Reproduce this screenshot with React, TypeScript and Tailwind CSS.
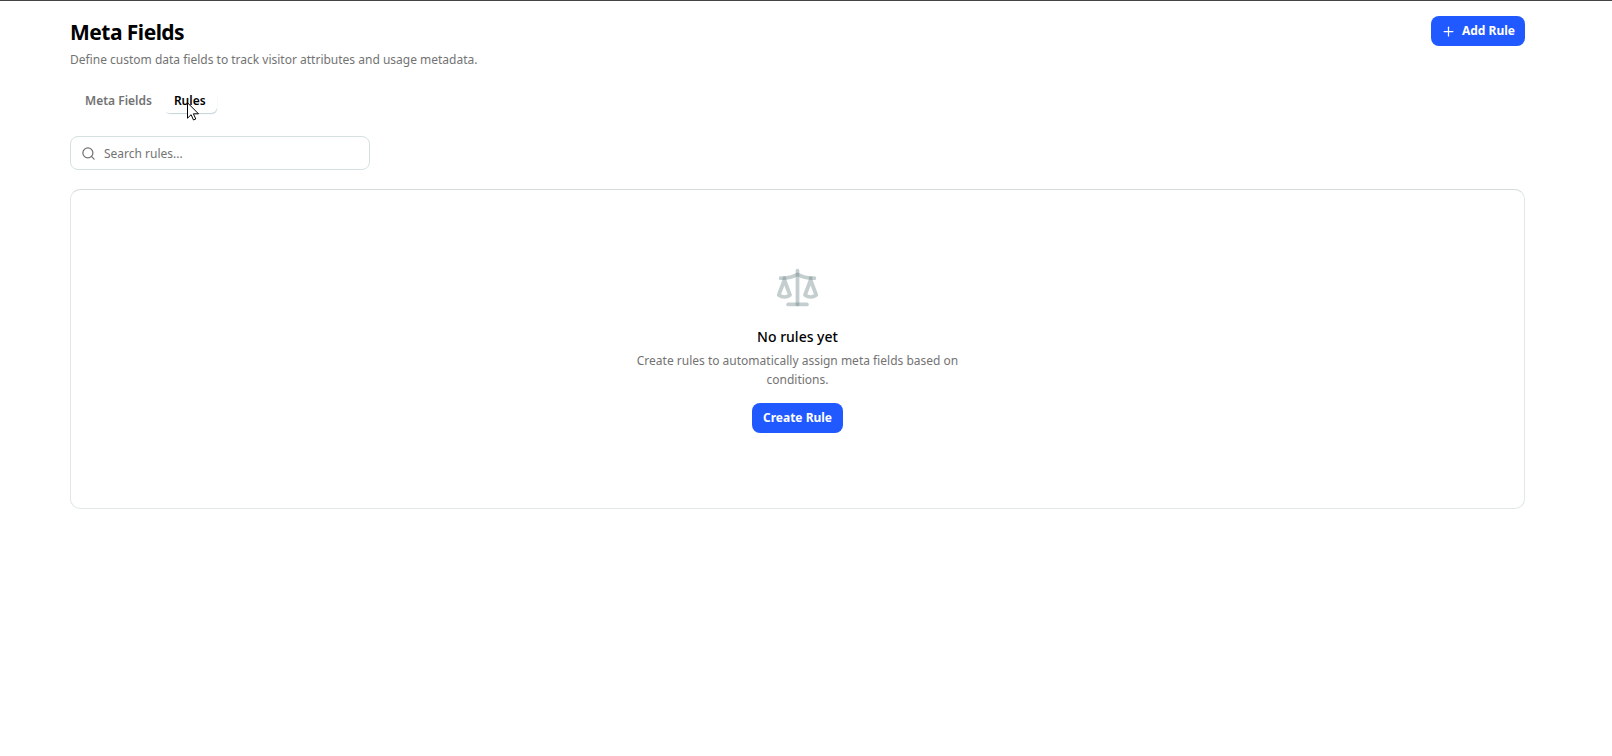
import * as React from "react";
import { Plus, Scale, Search } from "lucide-react";
import { clsx } from "clsx";

const tabs = [
  { id: "fields", title: "Meta Fields" },
  { id: "rules", title: "Rules" },
];

export default function App() {
  const [activeTab, setActiveTab] = React.useState("rules");
  const [query, setQuery] = React.useState("");

  return (
    <main className="min-h-screen border-t border-[#444444] bg-white pt-[15px] pr-[87px] pb-8 pl-[70px] font-['Noto_Sans','Open_Sans',sans-serif] text-xs text-[#737373]">
      <header className="flex items-start justify-between">
        <div>
          <h1 className="text-[21px] leading-8 font-bold tracking-tight text-black">
            Meta Fields
          </h1>
          <p className="mt-0.5 leading-5">
            Define custom data fields to track visitor attributes and usage
            metadata.
          </p>
        </div>
        <Button className="gap-1.5 px-2.5">
          <Plus className="h-[15px] w-[15px]" />
          Add Rule
        </Button>
      </header>

      <div role="tablist" className="mt-[15px] flex h-8 px-1 py-1">
        {tabs.map((tab) => (
          <Tab
            key={tab.id}
            title={tab.title}
            active={activeTab === tab.id}
            onSelect={() => setActiveTab(tab.id)}
          />
        ))}
      </div>

      <div className="relative mt-[19px] w-[300px]">
        <Search className="absolute top-[10px] left-[11px] h-[15px] w-[15px]" />
        <input
          type="text"
          aria-label="Search rules"
          placeholder="Search rules..."
          value={query}
          onChange={(e) => setQuery(e.target.value)}
          className="block h-[34px] w-full rounded-lg border border-[#d5e0e0] bg-white pr-3 pl-[33px] text-black outline-none placeholder:text-[#737373]"
        />
      </div>

      <section className="mt-[19px] flex h-80 flex-col items-center justify-center rounded-[10px] border border-[#dfe7e7] border-t-[#d6dbdb] text-center">
        <Scale className="h-[45px] w-[45px] text-[#6c8484]/40" />
        <h2 className="mt-4 text-sm leading-[22px] font-medium text-black">
          No rules yet
        </h2>
        <p className="mt-[3px] w-[345px] leading-[19px]">
          Create rules to automatically assign meta fields based on conditions.
        </p>
        <Button className="mt-3.5 px-[11px]">Create Rule</Button>
      </section>
    </main>
  );
}

interface ButtonProps extends React.PropsWithChildren {
  className?: string;
}

function Button({ className, children }: ButtonProps) {
  return (
    <button
      type="button"
      className={clsx(
        "flex h-[30px] items-center rounded-lg bg-[#2059ff] font-bold text-white hover:bg-blue-700",
        className,
      )}
    >
      {children}
    </button>
  );
}

interface TabProps {
  title: string;
  active: boolean;
  onSelect: () => void;
}

function Tab({ title, active, onSelect }: TabProps) {
  return (
    <button
      type="button"
      role="tab"
      aria-selected={active}
      onClick={onSelect}
      className={clsx(
        "relative flex items-center rounded-md px-[11px] font-semibold",
        active && "text-black shadow-[1px_2px_1px_-1px_#c3d4d8]",
      )}
    >
      {title}
      {active && <Pointer />}
    </button>
  );
}

function Pointer() {
  return (
    <svg
      viewBox="0 0 12 19"
      className="absolute top-[13px] left-6 h-[19px] w-3"
      aria-hidden="true"
    >
      <path
        d="M.5.8v15.4l3.6-3.5 2.4 5.3 2.3-1-2.4-5.2h5.1z"
        fill="white"
        stroke="black"
        strokeWidth="1"
      />
    </svg>
  );
}
